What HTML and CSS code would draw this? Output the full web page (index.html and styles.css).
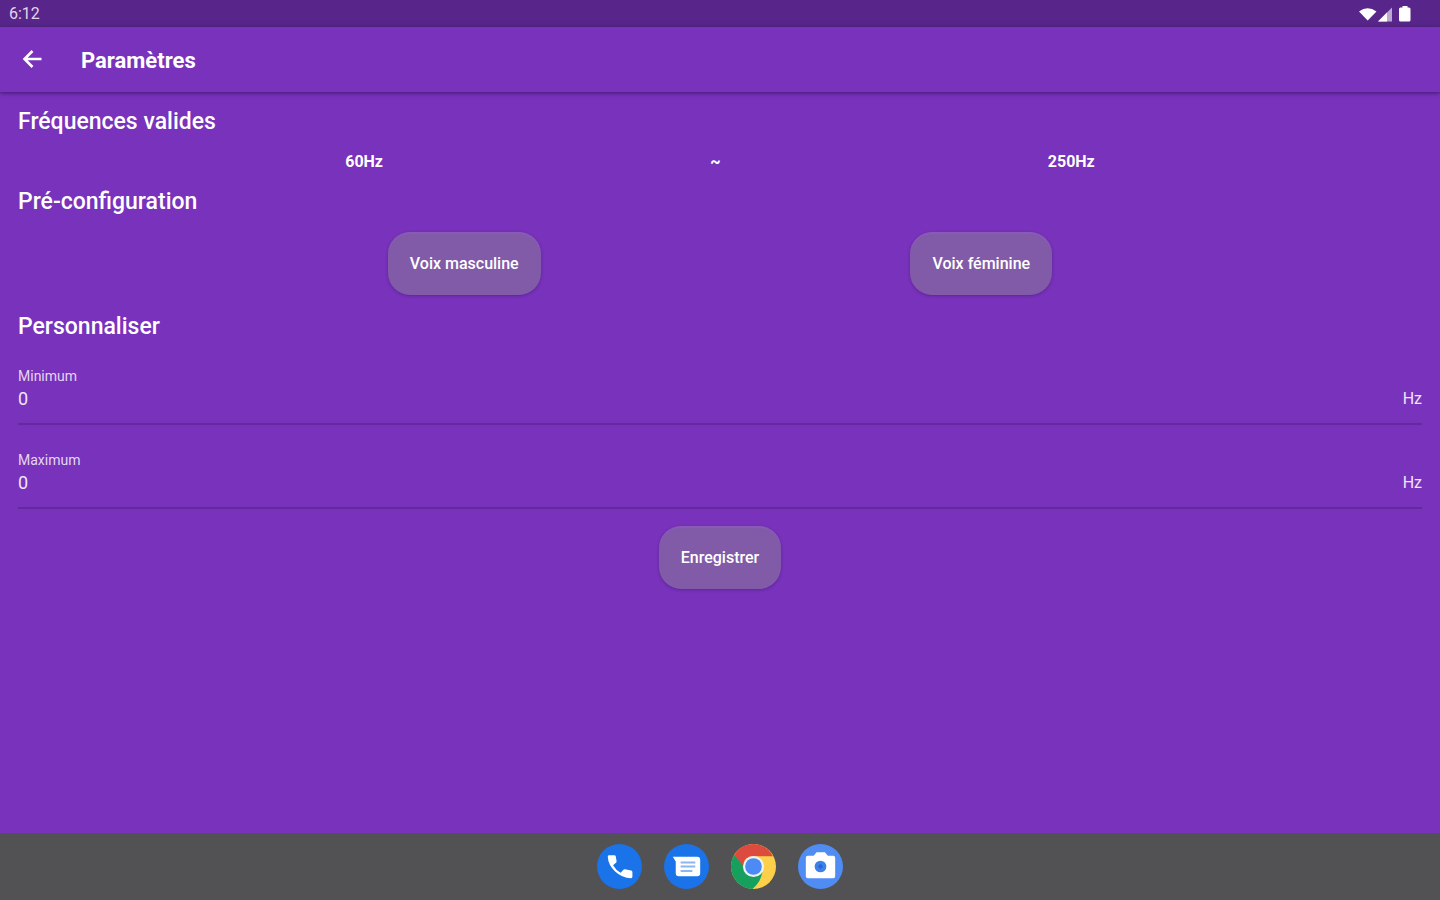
FILE: index.html
```html
<!DOCTYPE html>
<html lang="fr">
<head>
<meta charset="utf-8">
<meta name="viewport" content="width=device-width, initial-scale=1">
<title>Paramètres</title>
<link rel="stylesheet" href="styles.css">
</head>
<body>
<div class="status">
  <span class="clock">6:12</span>
  <svg class="status-icons" width="54" height="18" viewBox="0 0 54 18" fill="#fff" aria-hidden="true">
    <path d="M1 6.500Q9.500 0 18.500 6.500L9.700 15.500z"/>
    <path d="M20 16.500 34 2.500v14z" opacity=".6"/>
    <path d="M20 16.500 29 7.500v9z"/>
    <path d="M42.500 2.500h2v-1.500h5v1.500h1.500q1.500 0 1.500 1.500v11q0 1.500-1.500 1.500h-8.500q-1.500 0-1.500-1.500v-11q0-1.500 1.500-1.500z"/>
  </svg>
</div>
<header class="appbar">
  <button class="back" type="button" aria-label="Retour">
    <svg width="20" height="20" viewBox="0 0 20 20" fill="none" stroke="#fff" stroke-width="2.600"><path d="M19.500 9H3M10.500 1 2.500 9l8 8"/></svg>
  </button>
  <h1 class="title">Paramètres</h1>
</header>
<main class="content">
  <h2 class="heading">Fréquences valides</h2>
  <div class="range"><span>60Hz</span><span>~</span><span>250Hz</span></div>
  <h2 class="heading">Pré-configuration</h2>
  <div class="presets">
    <button class="btn" type="button">Voix masculine</button>
    <button class="btn" type="button">Voix féminine</button>
  </div>
  <h2 class="heading">Personnaliser</h2>
  <form class="form">
    <div class="field">
      <label class="label" for="min">Minimum</label>
      <div class="entry"><input class="input" id="min" type="text" inputmode="numeric" value="0"><span>Hz</span></div>
    </div>
    <div class="field">
      <label class="label" for="max">Maximum</label>
      <div class="entry"><input class="input" id="max" type="text" inputmode="numeric" value="0"><span>Hz</span></div>
    </div>
    <button class="btn save" type="button">Enregistrer</button>
  </form>
</main>
<nav class="dock">
  <button class="app" type="button" aria-label="Téléphone">
    <svg viewBox="0 0 46 46"><circle cx="23" cy="23" r="23" fill="#1a73e8"/><path d="M12.500 11.500h5.200q1.300 0 1.500 1.300l.8 4.700q.2 1-.6 1.700l-3 2.600q2.800 5 7.800 7.700l2.600-3q.7-.8 1.700-.6l6.400 1.300q1.300.3 1.300 1.600v4.700q0 1.500-1.500 1.500Q25.500 34.500 18.500 28 11.500 21.500 11 13q0-1.500 1.500-1.500z" fill="#fff"/></svg>
  </button>
  <button class="app" type="button" aria-label="Messages">
    <svg viewBox="0 0 46 46"><circle cx="23" cy="23" r="23" fill="#1a73e8"/><path d="M9 13h25q3 0 3 3v14q0 3-3 3H15q-3 0-3-3V18z" fill="#fff"/><path d="M17 19h15M17 23h15M17 27.500h12" stroke="#8db5f0" stroke-width="2"/></svg>
  </button>
  <button class="app" type="button" aria-label="Chrome">
    <svg viewBox="0 0 46 46"><circle cx="23" cy="23" r="23" fill="#fcd04b"/><path d="M3.080 11.500A23 23 0 0 0 22 46Q31 38 32.100 28.300L23 23z" fill="#17a05d"/><path d="M3.080 11.500Q10 .1 23 0q13.500.3 19.900 12.500H23q-9 0-11 9z" fill="#dd4b3e"/><circle cx="23" cy="23" r="10.800" fill="#f1f1f1"/><circle cx="23" cy="23" r="8.500" fill="#4c8bf5"/></svg>
  </button>
  <button class="app" type="button" aria-label="Appareil photo">
    <svg viewBox="0 0 46 46"><circle cx="23" cy="23" r="23" fill="#4f8df5"/><path d="M10 12h6l3-3.500h8.500l3 3.500H36q2 0 2 2v19q0 2-2 2H10q-2 0-2-2V14q0-2 2-2z" fill="#fff"/><circle cx="23" cy="23" r="6" fill="#3f7fe8"/><circle cx="23" cy="23" r="2.200" fill="#2467d4"/></svg>
  </button>
</nav>
</body>
</html>
```
FILE: styles.css
```css
* { box-sizing: border-box; }
body {
  margin: 0;
  min-height: 100vh;
  display: flex;
  flex-direction: column;
  background: #7832bb;
  color: #fff;
  font-family: Roboto, "Liberation Sans", sans-serif;
  font-size: 16px;
}
button { padding: 0; border: 0; background: none; color: inherit; font: inherit; cursor: pointer; }
svg { display: block; }
.status {
  height: 27px;
  padding: 0 28px 0 9px;
  display: flex;
  align-items: center;
  justify-content: space-between;
  background: #58268a;
}
.clock { color: #e0d6ea; }
.appbar {
  height: 65px;
  padding: 0 22px;
  display: flex;
  align-items: center;
  gap: 39px;
  box-shadow: 0 1px 4px rgba(30, 5, 60, .6);
}
.title { margin: 0; padding-top: 2px; font-size: 22px; line-height: 28px; font-weight: 700; }
.content { flex: 1; padding: 16px 18px; }
.heading { margin: 0; font-size: 23px; line-height: 28px; font-weight: 500; }
.range {
  display: flex;
  justify-content: space-evenly;
  padding: 16px 0;
  line-height: 20px;
  font-weight: 700;
}
.presets { display: flex; justify-content: space-evenly; padding: 16px 0 18px; }
.btn {
  height: 63px;
  padding: 0 22px;
  border-radius: 22px;
  background: #815ba8;
  box-shadow: 0 1px 3px rgba(50, 10, 90, .35), inset 0 2px 1px rgba(150, 90, 200, .5);
  font-weight: 500;
}
.form { display: flex; flex-direction: column; }
.field {
  height: 84px;
  display: flex;
  flex-direction: column;
  justify-content: flex-end;
  border-bottom: 2px solid #64299e;
}
.label { font-size: 14px; line-height: 18px; color: #e5d6f2; }
.entry { display: flex; padding: 2px 0 12px; line-height: 24px; color: #f0e6f8; }
.input {
  flex: 1;
  min-width: 0;
  height: 24px;
  padding: 0;
  border: 0;
  outline: 0;
  background: none;
  color: inherit;
  font: inherit;
  font-size: 18px;
}
.save { align-self: center; margin-top: 17px; }
.dock {
  height: 67px;
  display: flex;
  justify-content: center;
  align-items: center;
  gap: 22px;
  background: #525254;
}
.app { width: 45px; height: 45px; }
```
